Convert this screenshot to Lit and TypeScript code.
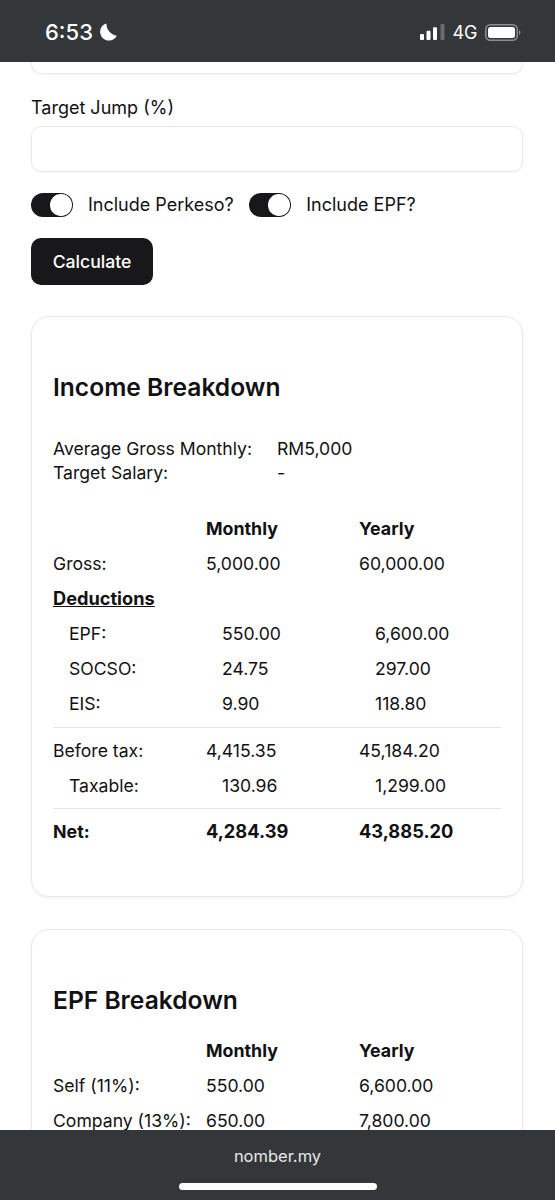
import { LitElement, html, css } from "lit";
import { customElement } from "lit/decorators.js";

type Row = { l: string; m?: string; y?: string; cls?: string };

const income: Row[] = [
  { l: "", m: "Monthly", y: "Yearly", cls: "bold" },
  { l: "Gross:", m: "5,000.00", y: "60,000.00" },
  { l: "Deductions", cls: "bold under" },
  { l: "EPF:", m: "550.00", y: "6,600.00", cls: "sub" },
  { l: "SOCSO:", m: "24.75", y: "297.00", cls: "sub" },
  { l: "EIS:", m: "9.90", y: "118.80", cls: "sub line first" },
  { l: "Before tax:", m: "4,415.35", y: "45,184.20", cls: "after" },
  { l: "Taxable:", m: "130.96", y: "1,299.00", cls: "sub line" },
  { l: "Net:", m: "4,284.39", y: "43,885.20", cls: "bold after net" },
];
const epf: Row[] = [
  { l: "", m: "Monthly", y: "Yearly", cls: "bold" },
  { l: "Self (11%):", m: "550.00", y: "6,600.00" },
  { l: "Company (13%):", m: "650.00", y: "7,800.00" },
];

@customElement("app-root")
export class AppRoot extends LitElement {
  static styles = css`
    :host { display: block; font-family: Inter, "Liberation Sans", sans-serif; color: #111113; }
    * { box-sizing: border-box; }
    .app { height: 1200px; display: flex; flex-direction: column; background: #fff; overflow: hidden; }
    .status { height: 62px; flex: none; background: #34373a; color: #fff; display: flex; align-items: center; justify-content: space-between; padding: 2px 34px 0 45px; }
    .time { display: flex; align-items: center; gap: 6px; font-size: 22px; font-weight: 500; }
    .sys { display: flex; align-items: center; gap: 7.5px; font-size: 18px; font-weight: 400; }
    .sys svg, .time svg { display: block; }
    .main { flex: 1; min-height: 0; overflow: hidden; padding: 0 32px 0 31px; }
    .stub { height: 12px; border: 1.5px solid #e8e8ea; border-top: 0; border-radius: 0 0 10px 10px; box-shadow: 0 1px 2px rgba(0,0,0,.04); }
    .field-label { margin-top: 22px; font-size: 18px; line-height: 24px; font-weight: 400; }
    .input { margin-top: 6px; height: 46px; border: 1.5px solid #e8e8ea; border-radius: 10px; box-shadow: 0 1px 2px rgba(0,0,0,.04); }
    .toggles { margin-top: 21px; display: flex; align-items: center; font-size: 18px; line-height: 24px; }
    .switch { width: 41.5px; height: 24px; flex: none; border-radius: 12px; background: #18181b; display: flex; align-items: center; justify-content: flex-end; padding-right: 1px; }
    .knob { width: 21.5px; height: 21.5px; border-radius: 50%; background: #fff; }
    .t-label { margin-left: 15.5px; margin-right: 15.5px; }
    .btn { margin-top: 21px; width: 122px; height: 47px; border: 0; border-radius: 10px; background: #18181b; color: #fff; font: 500 17.6px Inter, sans-serif; padding: 0 0 1px; display: block; }
    .card { border: 1.5px solid #e8e8ea; border-radius: 18px; padding: 0 21px; box-shadow: 0 1px 3px rgba(0,0,0,.08); }
    .c1 { margin-top: 31px; height: 581px; padding-top: 53px; }
    .c2 { margin-top: 32px; padding-top: 53px; height: 400px; }
    h2 { margin: 0; font-size: 24.6px; line-height: 34px; font-weight: 600; }
    .kv { margin-top: 33px; display: grid; grid-template-columns: 224px 1fr; font-size: 17.6px; line-height: 24px; font-weight: 400; }
    .tbl { display: grid; grid-template-columns: 153px 153px 1fr; font-size: 17.6px; }
    .c1 .tbl { margin-top: 26px; }
    .c2 .tbl { margin-top: 16px; }
    .r { display: contents; }
    .cell { height: 35px; line-height: 35px; white-space: nowrap; }
    .bold .cell { font-weight: 700; font-size: 17.8px; }
    .under .cell:first-child { text-decoration: underline; font-size: 18.2px; }
    .sub .cell { padding-left: 16px; }
    .line .cell { height: 41px; border-bottom: 1px solid #e4e4e7; }
    .line.first .cell { height: 42px; }
    .after .cell { height: 40px; padding-top: 5px; }
    .net .cell { height: 46px; font-size: 18.3px; }
    .net .cell:first-child { font-size: 17.8px; }
    .bottom { height: 70.5px; flex: none; background: #34373a; color: #e8e8e8; display: flex; flex-direction: column; align-items: center; position: relative; z-index: 1; }
    .url { font-size: 16.5px; line-height: 24px; margin-top: 14px; }
    .home { width: 198px; height: 6.5px; border-radius: 4px; background: #fff; margin-top: 15.5px; }
  `;

  private table(rows: Row[]) {
    return html`<div class="tbl">
      ${rows.map(
        (r) => html`<div class="r ${r.cls ?? ""}">
          <div class="cell">${r.l}</div>
          <div class="cell">${r.m ?? ""}</div>
          <div class="cell">${r.y ?? ""}</div>
        </div>`
      )}
    </div>`;
  }

  render() {
    return html`<div class="app">
      <div class="status">
        <div class="time">6:53
          <svg width="18" height="18" viewBox="0 0 18 18"><path fill="#fff" d="M7.400 .4A8.800 8.800 0 1 0 17.800 12.800 12 12 0 0 1 7.400 .4Z"/></svg>
        </div>
        <div class="sys">
          <svg width="25" height="16" viewBox="0 0 25 16">
            <rect x="0" y="10" width="4" height="6" rx="1" fill="#fff"/>
            <rect x="6.500" y="6.700" width="4" height="9.300" rx="1" fill="#fff"/>
            <rect x="13" y="3.300" width="4" height="12.700" rx="1" fill="#fff"/>
            <rect x="20.500" y="0" width="4" height="16" rx="1" fill="#6b6e71"/>
          </svg>
          <span>4G</span>
          <svg width="36" height="17" viewBox="0 0 36 17">
            <rect x="0.750" y="0.750" width="31.500" height="15.500" rx="4.500" fill="none" stroke="#8b8d90" stroke-width="1.500"/>
            <rect x="3" y="3" width="27" height="11" rx="2.500" fill="#fff"/>
            <path d="M34 6v5c.9-.4 1.400-1.400 1.400-2.500S34.900 6.400 34 6Z" fill="#8b8d90"/>
          </svg>
        </div>
      </div>
      <div class="main">
        <div class="stub"></div>
        <div class="field-label">Target Jump (%)</div>
        <div class="input"></div>
        <div class="toggles">
          <div class="switch"><div class="knob"></div></div>
          <span class="t-label">Include Perkeso?</span>
          <div class="switch"><div class="knob"></div></div>
          <span class="t-label">Include EPF?</span>
        </div>
        <button class="btn">Calculate</button>
        <div class="card c1">
          <h2>Income Breakdown</h2>
          <div class="kv">
            <div>Average Gross Monthly:</div><div>RM5,000</div>
            <div>Target Salary:</div><div>-</div>
          </div>
          ${this.table(income)}
        </div>
        <div class="card c2">
          <h2>EPF Breakdown</h2>
          ${this.table(epf)}
        </div>
      </div>
      <div class="bottom">
        <div class="url">nomber.my</div>
        <div class="home"></div>
      </div>
    </div>`;
  }
}
